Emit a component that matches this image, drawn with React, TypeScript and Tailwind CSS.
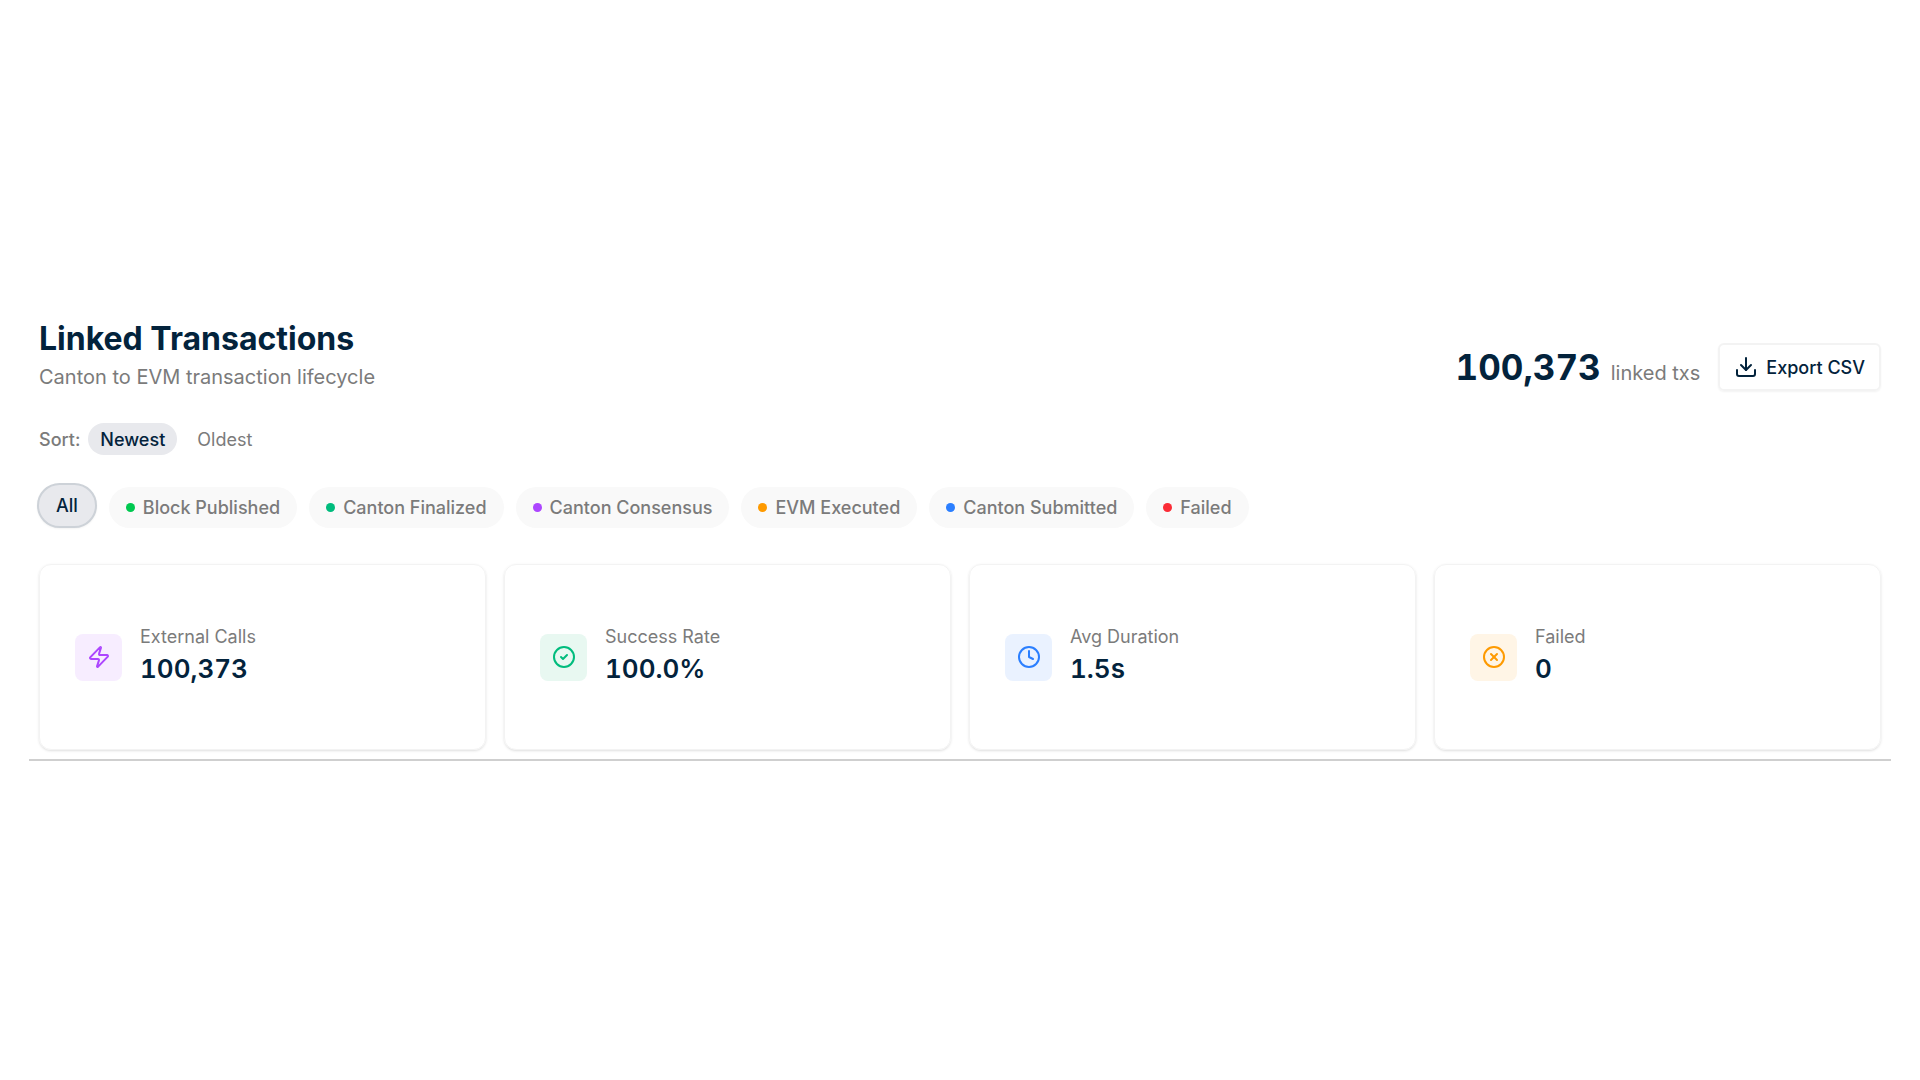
import { useState } from 'react';
import { CircleCheck, CircleX, Clock, Download, Zap } from 'lucide-react';

const SORT_OPTIONS = ['Newest', 'Oldest'];

const STATUS_FILTERS = [
  { label: 'Block Published', dot: 'bg-[#00c950]' },
  { label: 'Canton Finalized', dot: 'bg-[#00bc7d]' },
  { label: 'Canton Consensus', dot: 'bg-[#ad46ff]' },
  { label: 'EVM Executed', dot: 'bg-[#fe9a00]' },
  { label: 'Canton Submitted', dot: 'bg-[#2b7fff]' },
  { label: 'Failed', dot: 'bg-[#fb2c36]' },
];

const STATS = [
  { label: 'External Calls', value: '100,373', icon: Zap, tone: 'bg-[#f7edff] text-[#ad46ff]' },
  { label: 'Success Rate', value: '100.0%', icon: CircleCheck, tone: 'bg-[#e8f8f1] text-[#00bc7d]' },
  { label: 'Avg Duration', value: '1.5s', icon: Clock, tone: 'bg-[#eaf2ff] text-[#2b7fff]' },
  { label: 'Failed', value: '0', icon: CircleX, tone: 'bg-[#fff5e6] text-[#fe9a00]' },
];

export default function App() {
  const [sort, setSort] = useState('Newest');
  const [status, setStatus] = useState('All');

  return (
    <div className="flex min-h-screen items-center bg-white px-[29px] font-['Inter',sans-serif] text-[#03233c]">
      <main className="w-full border-b-2 border-[#cfcfcf] px-[10px] pb-[9px]">
        <header className="flex items-end justify-between">
          <div>
            <h1 className="text-[32px] leading-[40px] font-bold">Linked Transactions</h1>
            <p className="mt-1 text-[20px] leading-[28px] text-[#7b7b7b]">Canton to EVM transaction lifecycle</p>
          </div>
          <div className="flex items-center gap-[18px]">
            <p className="flex items-baseline gap-[10px]">
              <span className="text-[35px] leading-[40px] font-bold tabular-nums">100,373</span>
              <span className="text-[20px] text-[#7b7b7b]">linked txs</span>
            </p>
            <button className="flex h-[48px] items-center gap-2 rounded-md border-2 border-[#f3f3f3] px-[14px] text-[18px] font-medium shadow-xs">
              <Download size={24} strokeWidth={2} />
              Export CSV
            </button>
          </div>
        </header>

        {/* Sort */}
        <div className="mt-8 flex items-center gap-2 text-[18px] font-medium text-[#7b7b7b]">
          <span>Sort:</span>
          {SORT_OPTIONS.map((s) => (
            <button key={s} onClick={() => setSort(s)}
              className={`h-8 rounded-full px-3 ${sort === s ? 'bg-[#e8e9ed] text-[#03233c]' : 'font-normal'}`}>{s}</button>
          ))}
        </div>

        {/* Status filters */}
        <div className="mt-7 -ml-[2px] flex flex-wrap items-end gap-3 text-[18px] font-medium">
          <button onClick={() => setStatus('All')}
            className={`h-[45px] rounded-full px-[17px] ${status === 'All' ? 'border-2 border-[#cdd2d8] bg-[#e8e9ed] shadow-xs' : 'bg-[#f9f9f9] text-[#7b7b7b]'}`}>All</button>
          {STATUS_FILTERS.map((f) => (
            <button key={f.label} onClick={() => setStatus(f.label)}
              className={`flex h-[41px] items-center gap-2 rounded-full px-[17px] ${status === f.label ? 'bg-[#e8e9ed]' : 'bg-[#f9f9f9] text-[#7b7b7b]'}`}>
              <span className={`size-[9px] rounded-full ${f.dot}`} />
              {f.label}
            </button>
          ))}
        </div>

        {/* Stats */}
        <div className="mt-9 grid grid-cols-4 gap-[18px]">
          {STATS.map((s) => (
            <div key={s.label} className="flex items-center gap-[18px] rounded-xl border border-[#f3f3f3] px-[35px] py-[60px] shadow-sm">
              <div className={`flex size-[47px] items-center justify-center rounded-lg ${s.tone}`}>
                <s.icon size={24} strokeWidth={2} />
              </div>
              <div>
                <p className="text-[18px] leading-6 text-[#7b7b7b]">{s.label}</p>
                <p className="text-[26px] leading-[40px] font-semibold tabular-nums">{s.value}</p>
              </div>
            </div>
          ))}
        </div>
      </main>
    </div>
  );
}
